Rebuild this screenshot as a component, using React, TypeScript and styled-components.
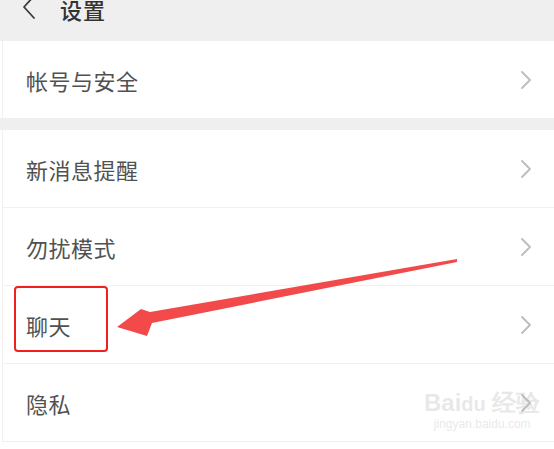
import styled, { createGlobalStyle } from "styled-components"

const GlobalStyle = createGlobalStyle`
  html, body { margin: 0; padding: 0; background: #ffffff; }
  body { font-family: "Noto Sans CJK SC", "Noto Sans", sans-serif; }
`

interface RowItem {
  label: string
}

const rows: RowItem[] = [
  { label: "新消息提醒" },
  { label: "勿扰模式" },
  { label: "聊天" },
  { label: "隐私" },
]

const Chevron = () => (
  <svg width="12" height="20" viewBox="0 0 12 20">
    <path d="M2 2 L10 10 L2 18" fill="none" stroke="#bcbcbc" strokeWidth="1.8" strokeLinecap="round" strokeLinejoin="round" />
  </svg>
)

const App = () => {
  return (
    <Screen>
      <GlobalStyle />
      <Header>
        <HeaderRow>
          <svg width="14" height="22" viewBox="0 0 14 22">
            <path d="M12 -2 L2 9 L12 20" fill="none" stroke="#3a3a3a" strokeWidth="1.8" strokeLinecap="round" strokeLinejoin="round" />
          </svg>
          <Title>设置</Title>
        </HeaderRow>
      </Header>

      <Section>
        <Row $noDivider>
          <Label>帐号与安全</Label>
          <Chevron />
        </Row>
      </Section>

      <Gap />

      <Section>
        {rows.map((r) => (
          <Row key={r.label} $noDivider={false}>
            <Label>{r.label}</Label>
            <Chevron />
          </Row>
        ))}
      </Section>

      {/* annotation overlay */}
      <Highlight />
      <Arrow width="554" height="449" viewBox="0 0 554 449">
        <path
          d="M457 259 L150 312 L141 309 L117 327 L147 336 L152 323 L457 262 Z"
          fill="#f24a4a"
        />
      </Arrow>

      <Watermark>
        <WmLogo>Bai<Paw>du</Paw> 经验</WmLogo>
        <WmUrl>jingyan.baidu.com</WmUrl>
      </Watermark>
    </Screen>
  )
}

export default App

const Screen = styled.div`
  position: relative;
  width: 554px;
  height: 449px;
  overflow: hidden;
  background: #ffffff;
`

const Header = styled.div`
  height: 41px;
  background: #efefef;
  display: flex;
  flex-direction: column;
`

const HeaderRow = styled.div`
  height: 20px;
  display: flex;
  align-items: center;
  gap: 24px;
  padding-left: 22px;
  transform: translateY(-1px);
`

const Title = styled.span`
  font-size: 22px;
  line-height: 20px;
  color: #333333;
  font-weight: 500;
  letter-spacing: 1px;
`

const Section = styled.div`
  background: #ffffff;
  border-left: 1px solid #f0f0f0;
  margin-left: 2px;
`

const Gap = styled.div`
  height: 12px;
  background: #efefef;
`

const Row = styled.div<{ $noDivider: boolean }>`
  height: 77px;
  display: flex;
  align-items: center;
  justify-content: space-between;
  padding: 0 22px 0 23px;
  border-bottom: ${(p) => (p.$noDivider ? "none" : "1px solid #f1f1f1")};
`

const Label = styled.span`
  font-size: 22px;
  color: #515151;
  letter-spacing: 0.5px;
`

const Highlight = styled.div`
  position: absolute;
  left: 14px;
  top: 286px;
  width: 90px;
  height: 62px;
  border: 2.5px solid #f21f1f;
  border-radius: 4px;
`

const Arrow = styled.svg`
  position: absolute;
  left: 0;
  top: 0;
  pointer-events: none;
`

const Watermark = styled.div`
  position: absolute;
  left: 424px;
  top: 390px;
  display: flex;
  flex-direction: column;
  align-items: center;
  color: rgba(190, 190, 190, 0.35);
  font-family: "Liberation Sans", Arial, sans-serif;
`

const WmLogo = styled.div`
  font-size: 24px;
  font-weight: bold;
  line-height: 26px;
`

const Paw = styled.span`
  font-size: 20px;
`

const WmUrl = styled.div`
  font-size: 12px;
  line-height: 14px;
`
